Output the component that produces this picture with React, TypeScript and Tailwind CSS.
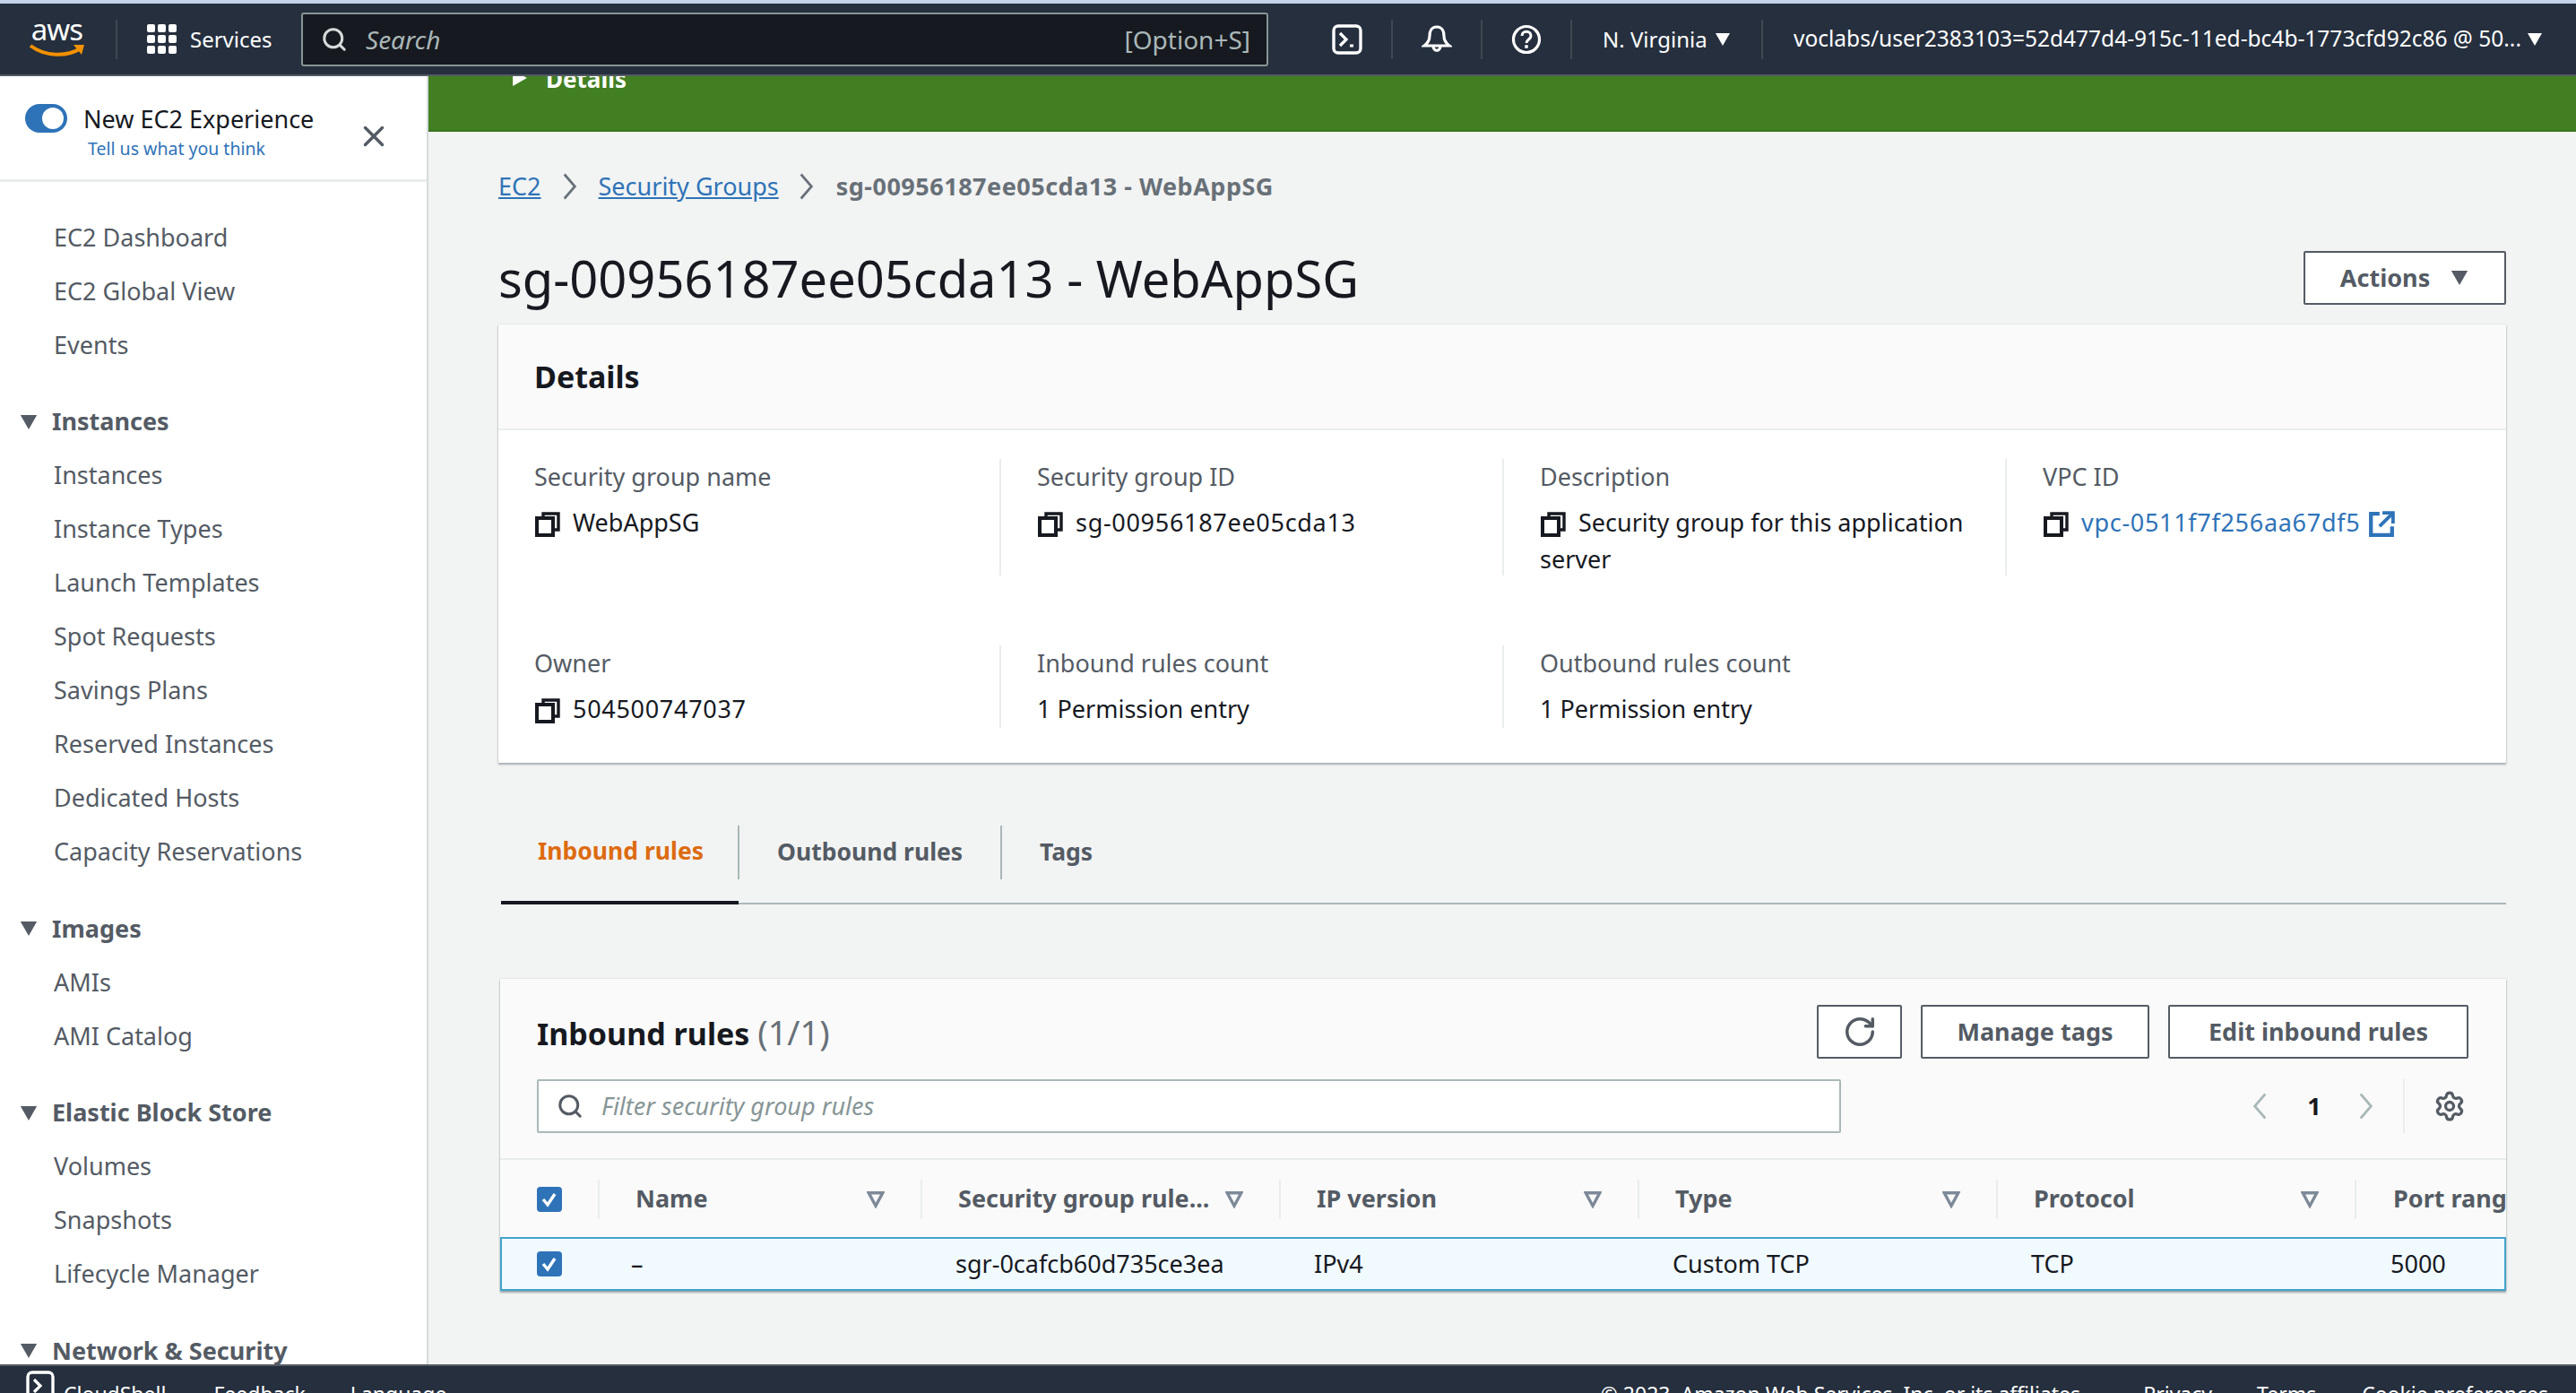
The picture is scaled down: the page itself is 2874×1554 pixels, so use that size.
import { Search, RotateCw, X, Settings } from 'lucide-react'

const sideGroups = [
  { title: '', items: ['EC2 Dashboard', 'EC2 Global View', 'Events'] },
  { title: 'Instances', items: ['Instances', 'Instance Types', 'Launch Templates', 'Spot Requests', 'Savings Plans', 'Reserved Instances', 'Dedicated Hosts', 'Capacity Reservations'] },
  { title: 'Images', items: ['AMIs', 'AMI Catalog'] },
  { title: 'Elastic Block Store', items: ['Volumes', 'Snapshots', 'Lifecycle Manager'] },
  { title: 'Network & Security', items: [] },
]

const columns = [
  { head: 'Security group rule...', cell: 'sgr-0cafcb60d735ce3ea' },
  { head: 'IP version', cell: 'IPv4' },
  { head: 'Type', cell: 'Custom TCP' },
  { head: 'Protocol', cell: 'TCP' },
]

function Triangle({ className }: { className: string }) {
  return (
    <svg viewBox="0 0 16 14" className={className}>
      <path d="M0 0h16L8 14z" fill="currentColor" />
    </svg>
  )
}

function Chevron({ dir, className }: { dir: 'left' | 'right'; className: string }) {
  return (
    <svg viewBox="0 0 20 32" className={`w-[18px] h-[32px] shrink-0 ${className}`}>
      <path d={dir === 'left' ? 'M17 1L4 16l13 15' : 'M3 1l13 15L3 31'} fill="none" stroke="currentColor" strokeWidth="3" />
    </svg>
  )
}

function FilterCaret() {
  return (
    <svg viewBox="0 0 18 18" className="w-[20px] h-[20px] shrink-0 text-[#7d8998]">
      <path d="M2 2.500h14L9 15.500z" fill="none" stroke="currentColor" strokeWidth="3" />
    </svg>
  )
}

function CopyIcon() {
  return (
    <svg viewBox="0 0 28 28" className="w-[28px] h-[28px] shrink-0 text-[#16191f]">
      <path d="M9 6V2h17v18h-5" fill="none" stroke="currentColor" strokeWidth="3.400" />
      <rect x="2" y="7" width="18" height="19" fill="none" stroke="currentColor" strokeWidth="4" />
    </svg>
  )
}

function Checkbox() {
  return (
    <div className="w-[28px] h-[28px] rounded-[4px] bg-[#2e73b8] flex items-center justify-center">
      <svg viewBox="0 0 28 28" className="w-[28px] h-[28px]">
        <path d="M7 14l5 6 8-12" fill="none" stroke="#fff" strokeWidth="3.400" />
      </svg>
    </div>
  )
}

function Divider({ className }: { className: string }) {
  return <div className={`w-[2px] shrink-0 ${className}`} />
}

function TopBar() {
  return (
    <header className="h-[85px] shrink-0 bg-[#252f3e] border-t-[4px] border-t-[#c3d2e8] border-b-[2px] border-b-[#545b64] flex items-center text-white text-[24px]">
      <div className="w-[129px] shrink-0 flex flex-col items-center pr-[2px] -mt-[3px]">
        <span className="text-[33px] leading-[30px] tracking-[-1px]">aws</span>
        <svg viewBox="0 0 64 18" className="w-[64px] h-[18px]">
          <path d="M2 3c16 12 40 13 56 3" fill="none" stroke="#f29100" strokeWidth="4" />
          <path d="M50 2l12 0-3 11z" fill="#f29100" />
        </svg>
      </div>
      <Divider className="h-[44px] bg-[#414750]" />
      <div className="w-[33px] h-[33px] ml-[33px] grid grid-cols-3 gap-[3px] shrink-0">
        {Array.from({ length: 9 }).map((_, i) => (
          <span key={i} className="bg-white rounded-[2px]" />
        ))}
      </div>
      <span className="ml-[15px] w-[124px] shrink-0">Services</span>
      <div className="w-[1079px] h-[60px] shrink-0 bg-[#16191f] border-2 border-[#879596] rounded-[3px] flex items-center pl-[20px] pr-[18px] text-[28px] text-[#aab7b8]">
        <Search className="w-[30px] h-[30px] text-[#d5dbdb]" strokeWidth={2.4} />
        <span className="ml-[20px] italic">Search</span>
        <span className="ml-auto">[Option+S]</span>
      </div>
      <svg viewBox="0 0 34 34" className="w-[34px] h-[34px] ml-[71px] shrink-0">
        <rect x="2" y="2" width="30" height="30" rx="5" fill="none" stroke="#fff" strokeWidth="3.400" />
        <path d="M9 10l7 7-7 7M20 24h4" fill="none" stroke="#fff" strokeWidth="3.200" />
      </svg>
      <Divider className="h-[44px] bg-[#414750] ml-[32px]" />
      <svg viewBox="0 0 34 36" className="w-[34px] h-[36px] ml-[32px] shrink-0">
        <path d="M17 4c-6 0-8 5-8 10 0 5-2 8-6 11h28c-4-3-6-6-6-11 0-5-2-10-8-10zM13 25c0 7 8 7 8 0" fill="none" stroke="#fff" strokeWidth="3.200" />
      </svg>
      <Divider className="h-[44px] bg-[#414750] ml-[32px]" />
      <svg viewBox="0 0 34 34" className="w-[34px] h-[34px] ml-[32px] shrink-0">
        <circle cx="17" cy="17" r="14.500" fill="none" stroke="#fff" strokeWidth="3.200" />
        <path d="M12 13c0-6.500 10-6.500 10 0 0 4-5 4-5 8" fill="none" stroke="#fff" strokeWidth="3" />
        <circle cx="17" cy="25" r="2" fill="#fff" />
      </svg>
      <Divider className="h-[44px] bg-[#414750] ml-[32px]" />
      <span className="ml-[34px] whitespace-nowrap w-[126px] shrink-0">N. Virginia</span>
      <Triangle className="w-[16px] h-[14px] shrink-0 text-white" />
      <Divider className="h-[44px] bg-[#414750] ml-[35px]" />
      <span className="ml-[34px] w-[811px] shrink-0 whitespace-nowrap overflow-hidden text-[24.500px]">voclabs/user2383103=52d477d4-915c-11ed-bc4b-1773cfd92c86 @ 50...</span>
      <Triangle className="w-[16px] h-[14px] ml-[8px] shrink-0 text-white" />
    </header>
  )
}

function Sidebar() {
  return (
    <aside className="w-[478px] shrink-0 bg-white border-r-[2px] border-r-[#d5dbdb] overflow-hidden">
      <div className="h-[118px] border-b-[3px] border-b-[#eaeded] flex pl-[28px] pr-[40px] pt-[31px]">
        <div className="w-[47px] h-[32px] rounded-full bg-[#2e73b8] flex items-center justify-end pr-[4px] shrink-0">
          <span className="w-[24px] h-[24px] rounded-full bg-white" />
        </div>
        <div className="ml-[18px] flex-1">
          <div className="text-[27px] leading-[34px] text-[#16191f] whitespace-nowrap">New EC2 Experience</div>
          <div className="text-[19.500px] leading-[26px] text-[#2e73b8] ml-[5px] mt-[3px]">Tell us what you think</div>
        </div>
        <X className="w-[38px] h-[38px] mt-[17px] text-[#545b64] shrink-0" strokeWidth={2.2} />
      </div>
      <nav className="pt-[20px]">
        {sideGroups.map(group => (
          <div key={group.title} className="mt-[12px] pb-[13.500px]">
            {group.title && (
              <div className="h-[60px] flex items-center pl-[22px] text-[#545b64] font-bold text-[27px] whitespace-nowrap">
                <Triangle className="w-[20px] h-[16px] mr-[16px] shrink-0" />
                {group.title}
              </div>
            )}
            {group.items.map(item => (
              <div key={item} className="h-[60px] flex items-center pl-[60px] text-[#545b64] text-[27px] whitespace-nowrap">{item}</div>
            ))}
          </div>
        ))}
      </nav>
    </aside>
  )
}

function DetailField({ label, value, copy = true, link = false, spaced = false }: { label: string; value: string; copy?: boolean; link?: boolean; spaced?: boolean }) {
  return (
    <div className="flex-1">
      <div className="text-[27px] leading-[40px] text-[#545b64]">{label}</div>
      <div className="mt-[10px] text-[27px] leading-[41px] text-[#16191f]">
        {copy && <span className="inline-block align-[-6px] mr-[14px] ml-[1px]"><CopyIcon /></span>}
        <span className={`${link ? 'text-[#2e73b8]' : ''} ${spaced ? 'tracking-[0.7px]' : ''}`}>{value}</span>
        {link && (
          <svg viewBox="0 0 28 28" className="inline-block w-[30px] h-[30px] ml-[9px] align-[-7px]">
            <path d="M12 3H3v22h22v-9" fill="none" stroke="#2e73b8" strokeWidth="4" />
            <path d="M12 16L24 4M15 2h11v11" fill="none" stroke="#2e73b8" strokeWidth="3.600" />
          </svg>
        )}
      </div>
    </div>
  )
}

function DetailCell({ children, last = false }: { children: React.ReactNode; last?: boolean }) {
  return (
    <div className={`w-[561px] shrink-0 pl-[40px] pr-[36px] ${last ? '' : 'border-r-[2px] border-r-[#eaeded]'}`}>
      {children}
    </div>
  )
}

function DetailsCard() {
  return (
    <section className="bg-white shadow-[0_2px_2px_rgba(0,28,36,0.3),0_0_2px_rgba(0,28,36,0.15)]">
      <div className="h-[118px] bg-[#fafafa] border-b-[2px] border-b-[#eaeded] flex items-center pl-[40px]">
        <h2 className="text-[34px] font-bold text-[#16191f]">Details</h2>
      </div>
      <div className="pt-[32px] pb-[39px] flex flex-col gap-[78px]">
        <div className="flex h-[130px]">
          <DetailCell><DetailField label="Security group name" value="WebAppSG" /></DetailCell>
          <DetailCell><DetailField label="Security group ID" value="sg-00956187ee05cda13" spaced /></DetailCell>
          <DetailCell><DetailField label="Description" value="Security group for this application server" /></DetailCell>
          <DetailCell last><DetailField label="VPC ID" value="vpc-0511f7f256aa67df5" link spaced /></DetailCell>
        </div>
        <div className="flex h-[92px]">
          <DetailCell><DetailField label="Owner" value="504500747037" spaced /></DetailCell>
          <DetailCell><DetailField label="Inbound rules count" value="1 Permission entry" copy={false} /></DetailCell>
          <DetailCell last><DetailField label="Outbound rules count" value="1 Permission entry" copy={false} /></DetailCell>
        </div>
      </div>
    </section>
  )
}

function Tabs() {
  return (
    <div className="mt-[62px] ml-[3px] h-[96px] border-b-[2px] border-b-[#aab7b8] flex text-[26.500px] font-bold text-[#545b64]">
      <div className="w-[265px] h-[96px] border-b-[4px] border-b-[#16191f] flex items-center pb-[18px] pl-[41px]">
        <span className="text-[#dd6b10]">Inbound rules</span>
      </div>
      <div className="w-[292px] flex items-center pb-[18px]">
        <Divider className="h-[60px] bg-[#aab7b8] -ml-[1px]" />
        <span className="ml-[42px]">Outbound rules</span>
      </div>
      <div className="flex items-center pb-[18px]">
        <Divider className="h-[60px] bg-[#aab7b8]" />
        <span className="ml-[42px]">Tags</span>
      </div>
    </div>
  )
}

function OutlineButton({ children, className }: { children: React.ReactNode; className: string }) {
  return (
    <div className={`bg-white border-2 border-[#545b64] rounded-[2px] flex items-center justify-center text-[#545b64] font-bold text-[27px] ${className}`}>
      {children}
    </div>
  )
}

function RulesCard() {
  return (
    <section className="mt-[83px] ml-[2px] bg-[#fafafa] shadow-[0_2px_2px_rgba(0,28,36,0.35),0_0_2px_rgba(0,28,36,0.15)]">
      <div className="h-[202px] border-b-[2px] border-b-[#eaeded] pl-[41px] pr-[42px] pt-[29px]">
        <div className="flex items-center">
          <h2 className="text-[34px] font-bold text-[#16191f]">Inbound rules <span className="font-normal text-[38px] text-[#687078]">(1/1)</span></h2>
          <OutlineButton className="ml-auto w-[95px] h-[60px]">
            <RotateCw className="w-[38px] h-[38px]" strokeWidth={2.2} />
          </OutlineButton>
          <OutlineButton className="ml-[21px] w-[255px] h-[60px]">Manage tags</OutlineButton>
          <OutlineButton className="ml-[21px] w-[335px] h-[60px]">Edit inbound rules</OutlineButton>
        </div>
        <div className="mt-[23px] flex items-center">
          <div className="w-[1455px] h-[60px] bg-white border-2 border-[#aab7b8] rounded-[2px] flex items-center pl-[20px]">
            <Search className="w-[30px] h-[30px] text-[#545b64]" strokeWidth={2.4} />
            <span className="ml-[20px] italic text-[#879596] text-[27px]">Filter security group rules</span>
          </div>
          <Chevron dir="left" className="ml-[458px] text-[#aab7b8]" />
          <span className="ml-[34px] w-[36px] text-center text-[27px] font-bold text-[#16191f]">1</span>
          <Chevron dir="right" className="ml-[31px] text-[#aab7b8]" />
          <Divider className="h-[60px] bg-[#eaeded] ml-[32px]" />
          <Settings className="w-[36px] h-[36px] ml-[32px] text-[#545b64]" strokeWidth={2.2} />
        </div>
      </div>

      <div className="overflow-hidden">
        <div className="h-[87px] flex items-center text-[27px] font-bold text-[#545b64] whitespace-nowrap">
          <div className="w-[109px] shrink-0 pl-[41px]"><Checkbox /></div>
          <div className="w-[360px] shrink-0 h-[44px] border-l-[2px] border-l-[#eaeded] pl-[40px] pr-[40px] flex items-center justify-between">
            Name <FilterCaret />
          </div>
          {columns.map(col => (
            <div key={col.head} className="w-[400px] shrink-0 h-[44px] border-l-[2px] border-l-[#eaeded] pl-[40px] pr-[40px] flex items-center justify-between">
              {col.head} <FilterCaret />
            </div>
          ))}
          <div className="flex-1 min-w-0 h-[44px] border-l-[2px] border-l-[#eaeded] pl-[41px] flex items-center overflow-hidden">
            Port range
          </div>
        </div>
        <div className="h-[60px] bg-[#f1faff] border-y-[2px] border-y-[#44a3cc] border-x-[2px] border-x-[#44a3cc] flex items-center -mt-[1px] text-[27px] text-[#16191f] whitespace-nowrap">
          <div className="w-[107px] shrink-0 pl-[39px]"><Checkbox /></div>
          <div className="w-[360px] shrink-0 pl-[37px]">–</div>
          {columns.map(col => (
            <div key={col.head} className="w-[400px] shrink-0 pl-[39px]">{col.cell}</div>
          ))}
          <div className="pl-[40px]">5000</div>
        </div>
      </div>
    </section>
  )
}

function Footer() {
  return (
    <footer className="h-[32px] shrink-0 bg-[#252f3e] border-t-[2px] border-t-[#545b64] overflow-hidden flex items-start pl-[29px] pr-[31px] text-[23px] leading-[30px] text-white whitespace-nowrap">
      <svg viewBox="0 0 32 32" className="w-[32px] h-[32px] mt-[5px] shrink-0">
        <rect x="2" y="2" width="28" height="28" rx="5" fill="none" stroke="#fff" strokeWidth="3.400" />
        <path d="M9 10l7 7-7 7" fill="none" stroke="#fff" strokeWidth="3.200" />
      </svg>
      <span className="ml-[10px] mt-[16px]">CloudShell</span>
      <span className="ml-[53px] mt-[16px]">Feedback</span>
      <span className="ml-[50px] mt-[16px]">Language</span>
      <span className="ml-auto mt-[16px]">© 2023, Amazon Web Services, Inc. or its affiliates.</span>
      <span className="ml-[64px] mt-[16px]">Privacy</span>
      <span className="ml-[50px] mt-[16px]">Terms</span>
      <span className="ml-[51px] mt-[16px]">Cookie preferences</span>
    </footer>
  )
}

export default function App() {
  return (
    <div className="w-[2874px] h-[1554px] flex flex-col overflow-hidden bg-[#f2f3f3] font-['Noto_Sans',sans-serif]">
      <TopBar />
      <div className="flex-1 min-h-0 flex">
        <Sidebar />
        <div className="flex-1 min-w-0 overflow-hidden">
          {/* green flash bar, scrolled mostly out of view */}
          <div className="h-[62px] bg-[#417f22] border-b-[2px] border-b-[#3a7420] overflow-hidden flex items-start pl-[93px] text-white font-bold text-[26px] leading-[30px]">
            <Triangle className="w-[18px] h-[18px] -rotate-90 mt-[-7px] shrink-0" />
            <span className="ml-[20px] -mt-[12px]">Details</span>
          </div>
          <main className="pl-[78px] pr-[78px]">
            <div className="mt-[41px] h-[40px] flex items-center text-[27px] text-[#2e73b8]">
              <span className="underline">EC2</span>
              <Chevron dir="right" className="mx-[23px] text-[#687078]" />
              <span className="underline">Security Groups</span>
              <Chevron dir="right" className="ml-[22px] mr-[24px] text-[#687078]" />
              <span className="text-[#687078] font-bold tracking-[0.5px]">sg-00956187ee05cda13 - WebAppSG</span>
            </div>
            <div className="mt-[52px] h-[60px] flex items-center justify-between">
              <h1 className="text-[56px] leading-[60px] text-[#16191f] whitespace-nowrap">sg-00956187ee05cda13 - WebAppSG</h1>
              <OutlineButton className="w-[226px] h-[60px] gap-[22px]">
                Actions
                <Triangle className="w-[22px] h-[16px]" />
              </OutlineButton>
            </div>
            <div className="mt-[22px]">
              <DetailsCard />
            </div>
            <Tabs />
            <RulesCard />
          </main>
        </div>
      </div>
      <Footer />
    </div>
  )
}
